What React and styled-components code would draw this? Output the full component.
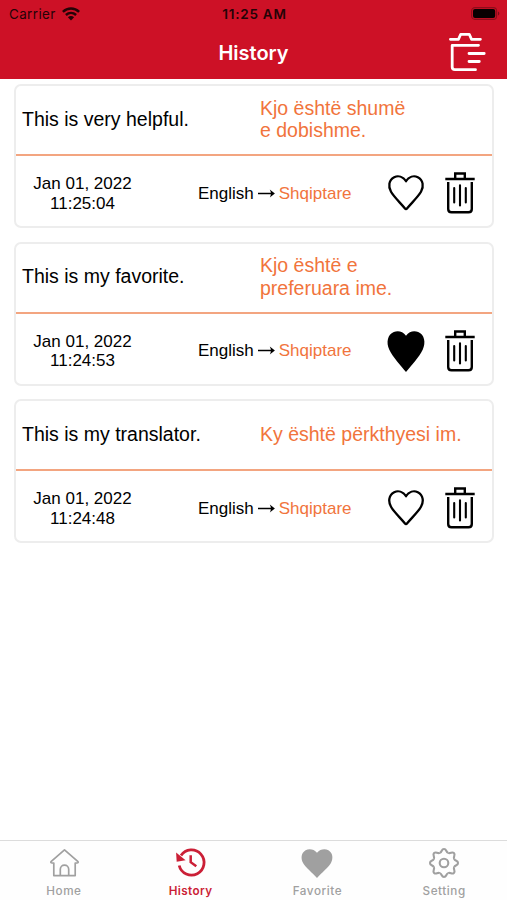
import styled, { createGlobalStyle } from 'styled-components'

const GlobalStyle = createGlobalStyle`
    * {
        box-sizing: border-box;
    }

    body {
        margin: 0;
        background-color: #fff;
        font-family: 'Liberation Sans', Arial, sans-serif;
    }

    svg {
        display: block;
        flex: none;
        overflow: visible;
    }
`;

const Screen = styled.div`
    display: flex;
    flex-direction: column;
    width: 507px;
    height: 900px;
    overflow: hidden;
`;

const Header = styled.header`
    height: 79px;
    flex: none;
    background-color: #cd1126;
    font-family: Inter, sans-serif;
`;

const StatusBar = styled.div`
    display: grid;
    grid-template-columns: 1fr auto 1fr;
    align-items: center;
    height: 27px;
    padding: 0 7px 0 9px;
    color: #240306;
`;

const Carrier = styled.div`
    display: flex;
    align-items: center;
    gap: 6px;
    font-size: 13.4px;
    letter-spacing: 0.4px;
`;

const Clock = styled.div`
    font-size: 13.5px;
    font-weight: 600;
    letter-spacing: 0.75px;
`;

const Battery = styled.div`
    display: flex;
    justify-content: flex-end;
`;

const TitleBar = styled.div`
    display: grid;
    grid-template-columns: 1fr auto 1fr;
    align-items: center;
    height: 52px;
    padding: 0 21.5px;
`;

const Title = styled.h1`
    grid-column: 2;
    margin: 0;
    color: #fff;
    font-size: 20px;
    font-weight: 600;
    line-height: 51px;
`;

const ClearButton = styled.button`
    justify-self: end;
    padding: 0;
    border: 0;
    background: none;
    color: #fff;
`;

const List = styled.main`
    display: flex;
    flex: 1;
    flex-direction: column;
    gap: 13.5px;
    padding: 5px 13px 0 14px;
`;

const Card = styled.article`
    height: 144px;
    flex: none;
    border: 2px solid #ededed;
    border-radius: 7px;
`;

const Phrases = styled.div`
    display: grid;
    grid-template-columns: 238px 1fr;
    align-items: center;
    height: 70px;
    padding-bottom: 2px;
    padding-left: 6px;
    border-bottom: 2px solid #f3a580;
    font-size: 19.5px;
    line-height: 22.5px;
`;

const Phrase = styled.div`
    color: ${({ $translated }) => ($translated ? '#f1743c' : '#000')};
    white-space: pre-line;
`;

const Details = styled.div`
    display: grid;
    grid-template-columns: 133px 237px 1fr;
    align-items: center;
    height: 70px;
    padding-top: 5px;
    font-size: 17px;
`;

const Stamp = styled.time`
    line-height: 19.5px;
    text-align: center;
    white-space: pre-line;
`;

const Languages = styled.div`
    display: flex;
    align-items: center;
    gap: 4px;
    padding-left: 49px;

    em {
        color: #f1743c;
        font-style: normal;
    }
`;

const Actions = styled.div`
    display: flex;
    align-items: center;
    justify-content: space-between;
    height: 43px;
    padding-right: 17.5px;
    padding-left: 0.5px;

    button {
        padding: 0;
        border: 0;
        background: none;
        color: #000;
    }
`;

const TabBar = styled.nav`
    display: grid;
    grid-template-columns: repeat(4, 1fr);
    height: 60px;
    flex: none;
    border-top: 1px solid #dcdcdc;
    background-color: #fefefe;
`;

const Tab = styled.a`
    display: flex;
    flex-direction: column;
    align-items: center;
    gap: 5px;
    padding-top: 7px;
    padding-left: 1px;
    color: ${({ $active }) => ($active ? '#cb1f36' : '#a0a0a0')};
    font-family: Inter, sans-serif;
    font-size: 11.7px;
    font-weight: ${({ $active }) => ($active ? 600 : 500)};
    letter-spacing: ${({ $active }) => ($active ? 0.4 : 0.55)}px;
    line-height: 16px;
`;

const WifiIcon = () => (
    <svg width='18' height='14' viewBox='0 0 18 14' fill='none' stroke='currentColor' strokeWidth='2.5'>
        <path d='M.9 4.8C5.5.5 12.5.5 17.1 4.8M3.9 8C7 5.2 11 5.2 14.1 8' />
        <path d='M9 13.6 5.9 10.3c1.8-1.6 4.4-1.6 6.2 0z' fill='currentColor' stroke='none' />
    </svg>
);

const BatteryIcon = () => (
    <svg width='29' height='13' viewBox='0 0 29 13'>
        <rect x='.6' y='.6' width='25' height='11.8' rx='3.4' fill='none' stroke='#8d0d1b' strokeWidth='1.1' />
        <rect x='2' y='2' width='22.2' height='9' rx='2' fill='#080001' />
        <path d='M27 4.5c1.8.7 1.8 3.3 0 4z' fill='#7d0b18' />
    </svg>
);

const ClearIcon = () => (
    <svg width='38' height='40' viewBox='0 0 38 40' fill='none' stroke='currentColor' strokeWidth='2.8' strokeLinecap='round' strokeLinejoin='round'>
        <path d='M2.4 6.3H10.5L12.7 1.3H21.3L23.5 6.3H32.4M30.5 12.3H4.2V34Q4.2 36.7 7 36.7H27.5M21 20.5H36.2M21 28.5H31.3' />
    </svg>
);

const HeartIcon = ({ filled }) => (
    <svg width='38' height='43' viewBox='0 0 38 43'>
        {filled ? (
            <path d='M19 5.7C22.2 1.3 27.2.5 31.2 2.1C37.5 4.7 39 12.7 35.8 19.5C32 27.5 24.5 35 19 42.1C13.5 35 6 27.5 2.2 19.5C-1 12.7.5 4.7 6.8 2.1C10.8.5 15.8 1.3 19 5.7Z' fill='currentColor' />
        ) : (
            <path d='M19 9.2C22 4.7 26.7 3.2 30.8 5.2C36.3 8.1 37 14.5 34 19.8C31 25 24.5 31 20.2 36.3Q19 37.8 17.8 36.3C13.5 31 7 25 4 19.8C1 14.5 1.7 8.1 7.2 5.2C11.3 3.2 16 4.7 19 9.2Z' fill='none' stroke='currentColor' strokeWidth='2.3' strokeLinejoin='round' />
        )}
    </svg>
);

const TrashIcon = () => (
    <svg width='30' height='43' viewBox='0 0 30 43' fill='none' stroke='currentColor' strokeWidth='2.4'>
        <path d='M.3 7H29.7M10.2 6.5V1.5H19.8V6.5M3.2 10V37Q3.2 40.3 6.5 40.3H23.5Q26.8 40.3 26.8 37V10' />
        <path d='M9.2 16V30.5M15 13.3V33.5M20.8 16V30.5' strokeWidth='2.1' strokeLinecap='round' />
    </svg>
);

const HomeIcon = () => (
    <svg width='30' height='30' viewBox='0 0 30 30' fill='none' stroke='currentColor' strokeWidth='1.7' strokeLinejoin='round'>
        <path d='M15.5 1.8 2 13.6Q1.1 15.1 4.8 15.1V27.6H26.2V15.1Q29.9 15.1 29 13.6Z' />
        <path d='M11.3 27.4V21.3a4.2 4.2 0 0 1 8.4 0V27.4' />
    </svg>
);

const HistoryIcon = () => (
    <svg width='30' height='30' viewBox='0 0 30 30' fill='none' stroke='currentColor' strokeWidth='2.8'>
        <path d='M5 7.5A12.6 12.6 0 1 1 3.2 17.5' />
        <path d='M14.7 7.3V14.2L20.3 18.3' strokeWidth='2.5' />
        <path d='M.1 4.4.7 13.8 9.6 12.3Z' fill='currentColor' stroke='none' />
    </svg>
);

const FavoriteIcon = () => (
    <svg width='30' height='30' viewBox='0 0 30 30'>
        <path d='M15 4.7C18 1.2 22.8.3 26.4 2.3C31 5 31.4 10.8 28.8 15.2C26 20 19.8 24.4 15 30C10.2 24.4 4 20 1.2 15.2C-1.4 10.8-1 5 3.6 2.3C7.2.3 12 1.2 15 4.7Z' fill='currentColor' />
    </svg>
);

const SettingIcon = () => (
    <svg width='30' height='30' viewBox='0 0 30 30' fill='none' stroke='currentColor' strokeWidth='2.1'>
        {/* one tooth, turned eight times round the centre */}
        {[0, 45, 90, 135, 180, 225, 270, 315].map((angle) => (
            <path key={angle} transform={`rotate(${angle} 15 15)`} d='M10.8 4.9C13.4 3.8 12.2 1 15 1C17.8 1 16.6 3.8 19.2 4.9' />
        ))}
        <circle cx='15' cy='15' r='4.3' />
    </svg>
);

const ArrowIcon = () => (
    <svg width='17' height='10' viewBox='0 0 17 10' fill='none' stroke='#000' strokeWidth='1.5'>
        <path d='M0 4.5H14.5' />
        <path d='M11.8.5 16.9 4.5 11.8 8.5Q13.9 4.5 11.8.5Z' fill='#000' stroke='none' />
    </svg>
);

const history = [
    { text: 'This is very helpful.', translation: 'Kjo është shumë\ne dobishme.', time: '11:25:04', favorite: false },
    { text: 'This is my favorite.', translation: 'Kjo është e\npreferuara ime.', time: '11:24:53', favorite: true },
    { text: 'This is my translator.', translation: 'Ky është përkthyesi im.', time: '11:24:48', favorite: false },
];

const tabs = [
    { label: 'Home', Icon: HomeIcon },
    { label: 'History', Icon: HistoryIcon, active: true },
    { label: 'Favorite', Icon: FavoriteIcon },
    { label: 'Setting', Icon: SettingIcon },
];

const HistoryCard = ({ item }) => {
    return (
        <Card>
            <Phrases>
                <Phrase>{item.text}</Phrase>
                <Phrase $translated>{item.translation}</Phrase>
            </Phrases>
            <Details>
                <Stamp>{`Jan 01, 2022\n${item.time}`}</Stamp>
                <Languages>
                    <span>English</span>
                    <ArrowIcon />
                    <em>Shqiptare</em>
                </Languages>
                <Actions>
                    <button><HeartIcon filled={item.favorite} /></button>
                    <button><TrashIcon /></button>
                </Actions>
            </Details>
        </Card>
    );
};

const App = () => {
    return (
        <Screen>
            <GlobalStyle />
            <Header>
                <StatusBar>
                    <Carrier>Carrier <WifiIcon /></Carrier>
                    <Clock>11:25 AM</Clock>
                    <Battery><BatteryIcon /></Battery>
                </StatusBar>
                <TitleBar>
                    <Title>History</Title>
                    <ClearButton><ClearIcon /></ClearButton>
                </TitleBar>
            </Header>
            <List>
                {history.map((item) => <HistoryCard key={item.time} item={item} />)}
            </List>
            <TabBar>
                {tabs.map(({ label, Icon, active }) => (
                    <Tab key={label} $active={active}>
                        <Icon />
                        {label}
                    </Tab>
                ))}
            </TabBar>
        </Screen>
    );
};

export default App;
